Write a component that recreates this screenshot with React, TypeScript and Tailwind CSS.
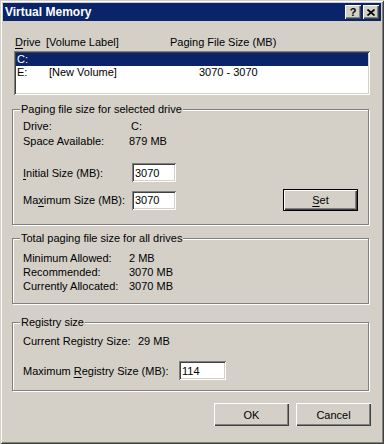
import React from 'react';

const raised =
  'bg-[#d4d0c8] shadow-[inset_1px_1px_0_#ffffff,inset_-1px_-1px_0_#404040,inset_-2px_-2px_0_#808080]';
const sunken =
  'bg-white shadow-[inset_1px_1px_0_#808080,inset_-1px_-1px_0_#ffffff,inset_2px_2px_0_#404040,inset_-2px_-2px_0_#d4d0c8]';
const etched =
  'border border-[#808080] shadow-[inset_1px_1px_0_#ffffff,1px_1px_0_#ffffff]';

const U: React.FC<{ children: React.ReactNode }> = ({ children }) => (
  <span className="underline underline-offset-[2px] decoration-1">{children}</span>
);

const TitleButton: React.FC<{ children: React.ReactNode }> = ({ children }) => (
  <div className={`w-[16px] h-[14px] flex items-center justify-center ${raised}`}>{children}</div>
);

const TextBox: React.FC<{ value: string; width: string }> = ({ value, width }) => (
  <div className={`${width} h-[19px] ${sunken} flex items-center pl-[3px] text-black`}>{value}</div>
);

const Group: React.FC<{ label: string; height: string; mt: string; children: React.ReactNode }> = ({
  label,
  height,
  mt,
  children,
}) => (
  <fieldset className={`${etched} ${height} ${mt} mr-[3px] p-0 m-0`}>
    <legend className="ml-[7px] px-[1px] leading-[14px] bg-[#d4d0c8]">{label}</legend>
    {children}
  </fieldset>
);

export default function App() {
  return (
    <div className="w-[384px] h-[444px] bg-[#d4d0c8] p-[3px] flex flex-col text-[11px] leading-[14px] text-black font-['Liberation_Sans',Arial,sans-serif] shadow-[inset_1px_1px_0_#d4d0c8,inset_-1px_-1px_0_#404040,inset_2px_2px_0_#ffffff,inset_-2px_-2px_0_#808080]">
      {/* title bar */}
      <div className="h-[18px] bg-[#0a246a] flex items-center pl-[2px] pr-[2px]">
        <span className="text-white font-bold text-[12px] leading-none">Virtual Memory</span>
        <div className="ml-auto flex gap-[2px]">
          <TitleButton>
            <span className="font-bold text-[11px] leading-none">?</span>
          </TitleButton>
          <TitleButton>
            <svg width="8" height="7" viewBox="0 0 8 7">
              <path d="M0.5 0.5L7.5 6.5M7.5 0.5L0.5 6.5" stroke="#000" strokeWidth="1.7" />
            </svg>
          </TitleButton>
        </div>
      </div>

      <div className="flex-1 flex flex-col px-[9px]">
        {/* list header */}
        <div className="mt-[14px] h-[14px] flex pl-[3px]">
          <span className="w-[31px]">
            <U>D</U>rive
          </span>
          <span className="w-[124px]">[Volume Label]</span>
          <span>Paging File Size (MB)</span>
        </div>

        {/* drive list */}
        <div className={`mt-[2px] mx-[2px] h-[44px] ${sunken} p-[2px]`}>
          <div className="h-[13px] bg-[#0a246a] text-white flex items-center pl-[1px] leading-[13px]">C:</div>
          <div className="h-[13px] flex items-center pl-[1px] leading-[13px]">
            <span className="w-[32px]">E:</span>
            <span className="w-[150px]">[New Volume]</span>
            <span>3070 - 3070</span>
          </div>
        </div>

        {/* paging file size for selected drive */}
        <Group label="Paging file size for selected drive" height="h-[123px]" mt="mt-[7px]">
          <div className="pl-[10px] pr-[10px] pt-[3px]">
            <div className="flex leading-[15px]">
              <span className="w-[106px]">Drive:</span>
              <span className="pl-[2px]">C:</span>
            </div>
            <div className="flex leading-[15px]">
              <span className="w-[106px]">Space Available:</span>
              <span>879 MB</span>
            </div>
            <div className="mt-[14px] flex items-center h-[19px]">
              <span className="w-[109px]">
                <U>I</U>nitial Size (MB):
              </span>
              <TextBox value="3070" width="w-[44px]" />
            </div>
            <div className="mt-[7px] flex items-center h-[22px]">
              <span className="w-[109px]">
                Ma<U>x</U>imum Size (MB):
              </span>
              <TextBox value="3070" width="w-[44px]" />
              <div className="ml-auto mr-[0px] w-[75px] h-[22px] border border-black">
                <div className={`w-full h-full ${raised} flex items-center justify-center`}>
                  <span>
                    <U>S</U>et
                  </span>
                </div>
              </div>
            </div>
          </div>
        </Group>

        {/* totals */}
        <Group label="Total paging file size for all drives" height="h-[73px]" mt="mt-[6px]">
          <div className="pl-[10px] pt-[6px]">
            <div className="flex">
              <span className="w-[106px]">Minimum Allowed:</span>
              <span>2 MB</span>
            </div>
            <div className="flex">
              <span className="w-[106px]">Recommended:</span>
              <span>3070 MB</span>
            </div>
            <div className="flex">
              <span className="w-[106px]">Currently Allocated:</span>
              <span>3070 MB</span>
            </div>
          </div>
        </Group>

        {/* registry */}
        <Group label="Registry size" height="h-[76px]" mt="mt-[11px]">
          <div className="pl-[10px] pt-[5px]">
            <div className="flex leading-[15px]">
              <span className="w-[115px]">Current Registry Size:</span>
              <span>29 MB</span>
            </div>
            <div className="mt-[12px] flex items-center h-[19px]">
              <span className="w-[156px]">
                Maximum <U>R</U>egistry Size (MB):
              </span>
              <TextBox value="114" width="w-[47px]" />
            </div>
          </div>
        </Group>

        {/* buttons */}
        <div className="mt-[12px] flex justify-end gap-[7px] mr-[1px]">
          <div className={`w-[75px] h-[23px] ${raised} flex items-center justify-center`}>OK</div>
          <div className={`w-[75px] h-[23px] ${raised} flex items-center justify-center`}>Cancel</div>
        </div>
      </div>
    </div>
  );
}
